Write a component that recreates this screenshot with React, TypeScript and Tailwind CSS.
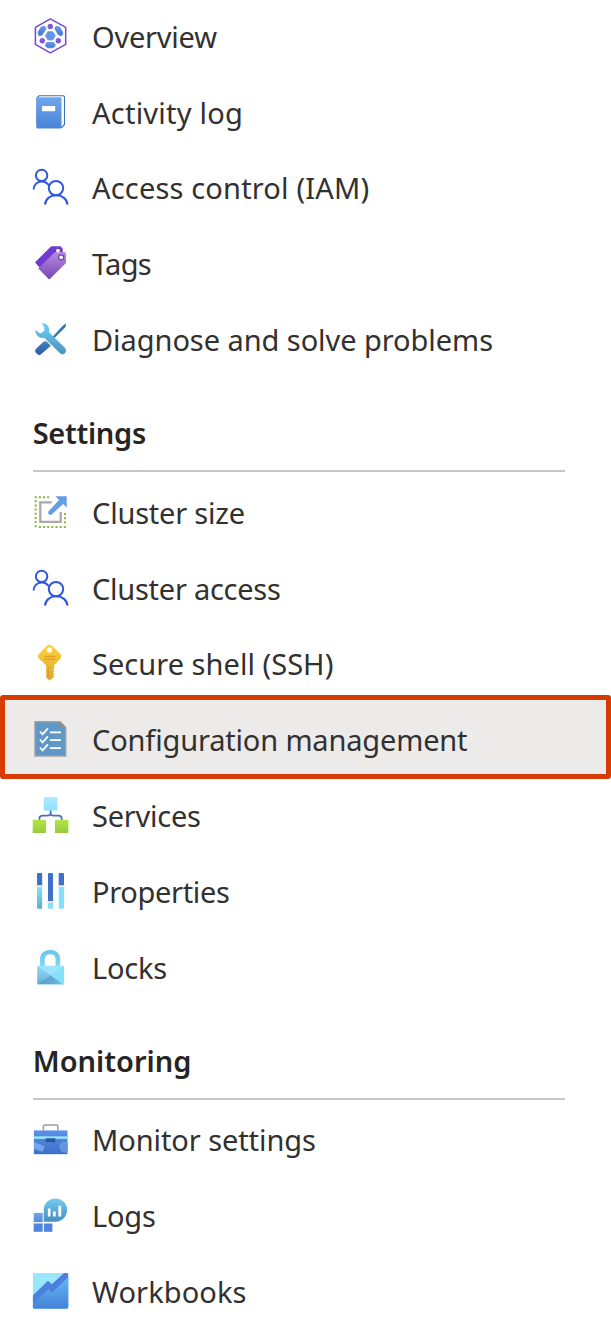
import type { ReactNode } from "react";

function Icon({ children }: { children: ReactNode }) {
  return (
    <svg viewBox="0.3 0 36 36" className="h-9 w-9 shrink-0 overflow-visible" fill="none" aria-hidden="true">
      {children}
    </svg>
  );
}

function Gradient({ id, from, to }: { id: string; from: string; to: string }) {
  return (
    <linearGradient id={id} x1="0" y1="0" x2="0" y2="1">
      <stop offset="0" stopColor={from} />
      <stop offset="1" stopColor={to} />
    </linearGradient>
  );
}

function OverviewIcon() {
  return (
    <Icon>
      <defs>
        <Gradient id="ov" from="#699de8" to="#3f76cf" />
      </defs>
      <path d="M17.6 .9 33 9.4V26.4L17.6 34.9 2.7 26.4V9.4Z" fill="#fff" stroke="#7a45dc" strokeWidth="1.5" strokeLinejoin="round" />
      <path d="M15.2 13.7h4.9l2.5 4.1-2.5 4.1h-4.9l-2.5-4.1Z" fill="#6096e6" stroke="#6096e6" strokeWidth=".8" strokeLinejoin="round" />
      <path d="M8.6 9 12.2 8.5 13.2 10.6 10 16.3 7.1 18 5.5 16.7V13.8Z" fill="url(#ov)" stroke="#4d84da" strokeWidth=".8" strokeLinejoin="round" />
      <path d="M26.7 9 23.1 8.5 22.1 10.6 25.3 16.3 28.2 18 29.8 16.7V13.8Z" fill="url(#ov)" stroke="#4d84da" strokeWidth=".8" strokeLinejoin="round" />
      <path d="M14.2 24.6h6.9l1.5 2.3-1 2-1.9.9h-4.1l-1.9-.9-1-2Z" fill="url(#ov)" stroke="#4d84da" strokeWidth=".8" strokeLinejoin="round" />
      <circle cx="17.6" cy="8.4" r="2.7" fill="#8558de" />
      <circle cx="9.6" cy="22.7" r="2.7" fill="#8558de" />
      <circle cx="25.6" cy="22.7" r="2.7" fill="#8558de" />
    </Icon>
  );
}

function ActivityLogIcon() {
  return (
    <Icon>
      <defs>
        <Gradient id="al" from="#6ea6ec" to="#4b83d8" />
      </defs>
      <path d="M4.3 4 6.5 1.7H30.3c.9 0 1.5.6 1.5 1.5V30.5L29 33.5H10L4.3 30Z" fill="#fff" stroke="#3f6fb4" strokeWidth="1.1" strokeLinejoin="round" />
      <rect x="3.6" y="3.3" width="25.2" height="31.3" rx="1" fill="url(#al)" />
      <rect x="9.3" y="12" width="13.2" height="5.2" rx=".4" fill="#fff" />
    </Icon>
  );
}

function PeopleIcon() {
  return (
    <Icon>
      <g stroke="#2f58dc" strokeWidth="2">
        <circle cx="8.9" cy="6.4" r="5.7" />
        <path d="M.9 20.6C.9 16 4.2 12.5 8.9 12.5 12 12.5 14.7 14 16.2 16.5" />
        <circle cx="23.3" cy="19.1" r="7.2" />
        <path d="M12.3 35.7C12.8 30 17.3 26.3 23.5 26.3S34.3 30 34.8 35.7" />
      </g>
    </Icon>
  );
}

function TagsIcon() {
  return (
    <Icon>
      <defs>
        <Gradient id="tg" from="#b98ade" to="#7548b5" />
      </defs>
      <path d="M2.3 17.2 18.3 1.6Q18.8 1.2 19.5 1.2H27.7L30 3.5V10L7 22.7Z" fill="#733ad2" />
      <circle cx="25.3" cy="5.6" r="2.1" fill="#fff" stroke="#42208c" strokeWidth="1" />
      <path d="M5.6 23.4 21.9 7.4Q22.3 7 23 7H31.6Q33.3 7 33.3 8.7V17.4Q33.3 18.1 32.8 18.6L17.2 34.1Q16.6 34.6 16 34.1Z" fill="url(#tg)" />
      <circle cx="25.3" cy="5.6" r="1.9" fill="#fff" />
      <circle cx="28.5" cy="12.3" r="2.5" fill="#fff" stroke="#673aad" strokeWidth="1.2" />
    </Icon>
  );
}

function DiagnoseIcon() {
  return (
    <Icon>
      <defs>
        <Gradient id="dg1" from="#6bcff5" to="#4f91bd" />
        <Gradient id="dg2" from="#4384c0" to="#2b59ab" />
      </defs>
      <path d="M33.4 2.3 32.8 5.9 18.7 20.1 17.2 18.7 30 4.7Z" fill="#3475ab" />
      <path d="M13.7 20.2 18.2 24.7 8.3 33.2Q6.3 34.7 4.5 32.9L2.9 31.3Q1.6 29.7 3.1 28.1L11 20.5Z" fill="url(#dg2)" />
      <path d="M9.1 2.4C13.9 1.9 17.4 5.7 16.3 11.2L31.9 26.6C35.6 30.5 31 35.9 27 32.1L11.5 16.7C6.9 18.1 2.7 14.4 2.6 8.8L7.5 12.5 11.5 9.9 11.7 6.5Z" fill="url(#dg1)" />
    </Icon>
  );
}

function ClusterSizeIcon() {
  return (
    <Icon>
      <g stroke="#82b93c" strokeWidth="2" strokeDasharray="2 2.15">
        <path d="M2 3.2H17.5" />
        <path d="M3 6.3V33.9" />
        <path d="M6.2 32.9H33.3" />
        <path d="M32.2 19V30" />
      </g>
      <path d="M19 8.4H7.6V27.9H28V18" stroke="#a9a9a9" strokeWidth="2.3" />
      <path d="M22.6 2.2H34V13.5L30.4 10 19.3 20.3Q17.7 21.7 16.2 20.2T16.2 17L26.3 6.1Z" fill="#629fe8" />
    </Icon>
  );
}

function KeyIcon() {
  return (
    <Icon>
      <defs>
        <Gradient id="ky" from="#fcd33c" to="#dfa62c" />
      </defs>
      <path d="M14.5.6Q16.8-1 19.1.6L27.9 9.3Q29.3 11.4 27.9 13.4L21.5 20.1V23.3L20.3 24.7 21.7 26.1 20.4 27.5 21.7 28.9 20.5 30.3 21.5 31.8 17 35.6 13.5 32.7V20.3L6 13.4Q4.3 11.5 6 9.3Z" fill="url(#ky)" />
      <circle cx="16.9" cy="5" r="2.6" fill="#fff" />
      <path d="M12 11.4H22.2M12 14.1H22.2" stroke="#dc9f1c" strokeWidth="1.2" strokeLinecap="round" />
      <path d="M15.5 22.5V31.5" stroke="#d49a22" strokeWidth="1.1" strokeLinecap="round" />
    </Icon>
  );
}

function ConfigurationIcon() {
  return (
    <Icon>
      <path d="M2.3.8H27.4L33 6.8V34.9H2.3Z" fill="#5f98c6" stroke="#a0a0a0" strokeWidth="1.5" />
      <path d="M27.3.3 33.6 6.9H27.3Z" fill="#8e8e8e" />
      <g stroke="#fff" strokeWidth="1.8">
        <path d="M7.3 10.5 9.9 13.3 15.2 7.4M7.3 18.5 9.9 21.3 15.2 15.4M7.3 26.5 9.9 29.3 15.2 23.4" />
        <path d="M17.3 11.3H28.3M17.3 19.2H28.3M17.3 27.1H28.3" />
      </g>
    </Icon>
  );
}

function ServicesIcon() {
  return (
    <Icon>
      <defs>
        <Gradient id="sv1" from="#b5e9ff" to="#8ddfff" />
        <Gradient id="sv2" from="#b4e445" to="#96cc3d" />
      </defs>
      <path d="M17.9 13V16Q17.9 18.7 14.5 18.7H10Q6.7 18.7 6.7 21.5V23.5M17.9 16Q17.9 18.7 21.3 18.7H25.7Q29 18.7 29 21.5V23.5" stroke="#426fcb" strokeWidth="1.7" />
      <rect x="11" y=".1" width="13.7" height="13.5" rx=".8" fill="url(#sv1)" />
      <rect x="0" y="22.7" width="13.3" height="13.3" rx=".6" fill="url(#sv2)" />
      <rect x="22.3" y="22.7" width="13.4" height="13.3" rx=".6" fill="url(#sv2)" />
    </Icon>
  );
}

function PropertiesIcon() {
  return (
    <Icon>
      <defs>
        <Gradient id="pr" from="#8be6fb" to="#61aacb" />
      </defs>
      <rect x="4.3" y="12" width="5.2" height="23.8" rx="1" fill="url(#pr)" />
      <rect x="15.3" y="26" width="5" height="9.8" rx="1" fill="#86e0fb" />
      <rect x="26" y="12" width="5.3" height="23.8" rx="1" fill="#86e0fb" />
      <path d="M4.3 12.5V1.1Q4.3 0 5.4 0H8.4Q9.5 0 9.5 1.1V12.5ZM15.3 28.5V1.1Q15.3 0 16.4 0H19.2Q20.3 0 20.3 1.1V28.5ZM26 12.5V1.1Q26 0 27.1 0H30.2Q31.3 0 31.3 1.1V12.5Z" fill="#3f70ca" />
      <path d="M4 13.2H10.3M15 29H20.7M25.7 13.2H31.7" stroke="#e4e6e8" strokeWidth="1.9" strokeLinecap="round" />
    </Icon>
  );
}

function LockIcon() {
  return (
    <Icon>
      <defs>
        <Gradient id="lk1" from="#69c9f1" to="#83d4f3" />
        <linearGradient id="lk2" x1="0" y1="1" x2="1" y2="1">
          <stop offset="0" stopColor="#5a9fca" />
          <stop offset=".6" stopColor="#62abd2" />
          <stop offset="1" stopColor="#7cc9e8" />
        </linearGradient>
        <Gradient id="lk3" from="#90dcf8" to="#6ab0d8" />
      </defs>
      <path d="M9.7 17V10.5C9.7 5.6 12.8 3 17.5 3S25.2 5.6 25.2 10.5V17" stroke="url(#lk1)" strokeWidth="4.7" />
      <rect x="4.6" y="16.7" width="26.7" height="18.7" rx=".9" fill="#9be4fb" />
      <path d="M17.9 26.2 31.3 35.3H5.5Q4.6 35.3 4.6 34.5Z" fill="url(#lk2)" />
      <path d="M18 26.3 31.3 17V34.5Q31.3 35.4 30.5 35.3Z" fill="#83e1fa" />
      <path d="M4.6 17 18 26.3 4.6 35Z" fill="url(#lk3)" />
    </Icon>
  );
}

function MonitorSettingsIcon() {
  return (
    <Icon>
      <defs>
        <Gradient id="ms" from="#5a93e7" to="#3b6fc9" />
        <clipPath id="msc">
          <rect x="1" y="9.2" width="34" height="24.2" rx="1" />
        </clipPath>
      </defs>
      <path d="M10.7 9.5V5Q10.7 3.9 11.8 3.9H24.1Q25.2 3.9 25.2 5V9.5" stroke="#9e9e9e" strokeWidth="1.5" />
      <g clipPath="url(#msc)">
        <rect x="1" y="9.2" width="34" height="24.2" fill="url(#ms)" />
        <rect x="1" y="15.3" width="34" height="2.6" fill="#9be1fb" />
        <path d="M1 20.8 12 25.3 9.8 30.7 1 27.8Z" fill="#75a4e8" />
        <circle cx="32.3" cy="26" r="5.7" fill="#6795e0" />
      </g>
      <rect x="13" y="17.3" width="9.7" height="3.9" rx=".4" fill="#28599f" />
    </Icon>
  );
}

function LogsIcon() {
  return (
    <Icon>
      <defs>
        <Gradient id="lg1" from="#72cdf0" to="#448fba" />
        <Gradient id="lg2" from="#73a5eb" to="#548ade" />
      </defs>
      <rect x="1" y="15.9" width="9" height="9.2" fill="url(#lg2)" />
      <rect x="1" y="26.5" width="9" height="8.3" fill="#4f85da" />
      <rect x="11.2" y="26.5" width="8.5" height="8.3" fill="#4f85da" />
      <path d="M11 13.1A11.7 11.7 0 1 1 22.7 24.8H12Q11 24.8 11 23.8Z" fill="url(#lg1)" />
      <path d="M15.2 11.4H17.8V19.5H15.2ZM20.3 14.5H23V19.5H20.3ZM25.7 8.7H28.5V19.5H25.7Z" fill="#fff" />
    </Icon>
  );
}

function WorkbooksIcon() {
  return (
    <Icon>
      <defs>
        <Gradient id="wb" from="#67b9f2" to="#4482da" />
        <clipPath id="wbc">
          <rect width="35.6" height="35.6" rx="1.7" />
        </clipPath>
      </defs>
      <g clipPath="url(#wbc)">
        <rect width="36" height="36" fill="#9be6ff" />
        <path d="M0 22.5 15.3 7.8 19 11.3 31.4 0H36V36H0Z" fill="#4b80dc" />
        <path d="M0 31.3 15.8 15.9 19.4 19.4 36 3.7V36H0Z" fill="url(#wb)" />
      </g>
    </Icon>
  );
}

interface Item {
  label: string;
  icon: ReactNode;
  tracking?: string;
  selected?: boolean;
}

interface Section {
  title?: string;
  tracking?: string;
  items: Item[];
}

const sections: Section[] = [
  {
    items: [
      { label: "Overview", icon: <OverviewIcon />, tracking: "tracking-[-0.22px]" },
      { label: "Activity log", icon: <ActivityLogIcon />, tracking: "tracking-[0.24px]" },
      { label: "Access control (IAM)", icon: <PeopleIcon />, tracking: "tracking-[0.17px]" },
      { label: "Tags", icon: <TagsIcon />, tracking: "tracking-[-0.7px]" },
      { label: "Diagnose and solve problems", icon: <DiagnoseIcon />, tracking: "tracking-[-0.06px]" },
    ],
  },
  {
    title: "Settings",
    tracking: "tracking-[-0.3px]",
    items: [
      { label: "Cluster size", icon: <ClusterSizeIcon />, tracking: "tracking-[-0.2px]" },
      { label: "Cluster access", icon: <PeopleIcon />, tracking: "tracking-[-0.26px]" },
      { label: "Secure shell (SSH)", icon: <KeyIcon />, tracking: "tracking-[0.03px]" },
      { label: "Configuration management", icon: <ConfigurationIcon />, tracking: "tracking-[-0.16px]", selected: true },
      { label: "Services", icon: <ServicesIcon />, tracking: "tracking-[-0.25px]" },
      { label: "Properties", icon: <PropertiesIcon />, tracking: "tracking-[-0.33px]" },
      { label: "Locks", icon: <LockIcon />, tracking: "tracking-[-0.25px]" },
    ],
  },
  {
    title: "Monitoring",
    items: [
      { label: "Monitor settings", icon: <MonitorSettingsIcon />, tracking: "tracking-[-0.08px]" },
      { label: "Logs", icon: <LogsIcon />, tracking: "tracking-[-0.2px]" },
      { label: "Workbooks", icon: <WorkbooksIcon />, tracking: "tracking-[0.08px]" },
    ],
  },
];

function NavItem({ item }: { item: Item }) {
  return (
    <li className="relative h-[75.8px]">
      {item.selected && (
        <div className="absolute inset-x-0 -top-[6px] h-[84px] rounded-[3px] border-[5px] border-[#d83b01] bg-[#edebe9]" />
      )}
      <a className="relative flex h-full items-center gap-[23px] pl-[33px]">
        {item.icon}
        <span className={`whitespace-nowrap pt-[2px] leading-10 ${item.tracking ?? ""}`}>{item.label}</span>
      </a>
    </li>
  );
}

export default function App() {
  return (
    <nav className="h-[1342px] w-[611px] overflow-hidden bg-white font-['Noto_Sans','Open_Sans',sans-serif] text-[29px] text-[#323130]">
      <div className="-mt-[2.2px]">
        {sections.map((section, index) => (
          <section key={index}>
            {section.title && (
              <h2
                className={`mr-[46px] mb-[1.8px] ml-[32.7px] h-[95.3px] border-b-2 border-[#c8c8c8] pt-[36.4px] leading-10 font-semibold text-[#262524] ${section.tracking ?? ""}`}
              >
                {section.title}
              </h2>
            )}
            <ul>
              {section.items.map((item) => (
                <NavItem key={item.label} item={item} />
              ))}
            </ul>
          </section>
        ))}
      </div>
    </nav>
  );
}
